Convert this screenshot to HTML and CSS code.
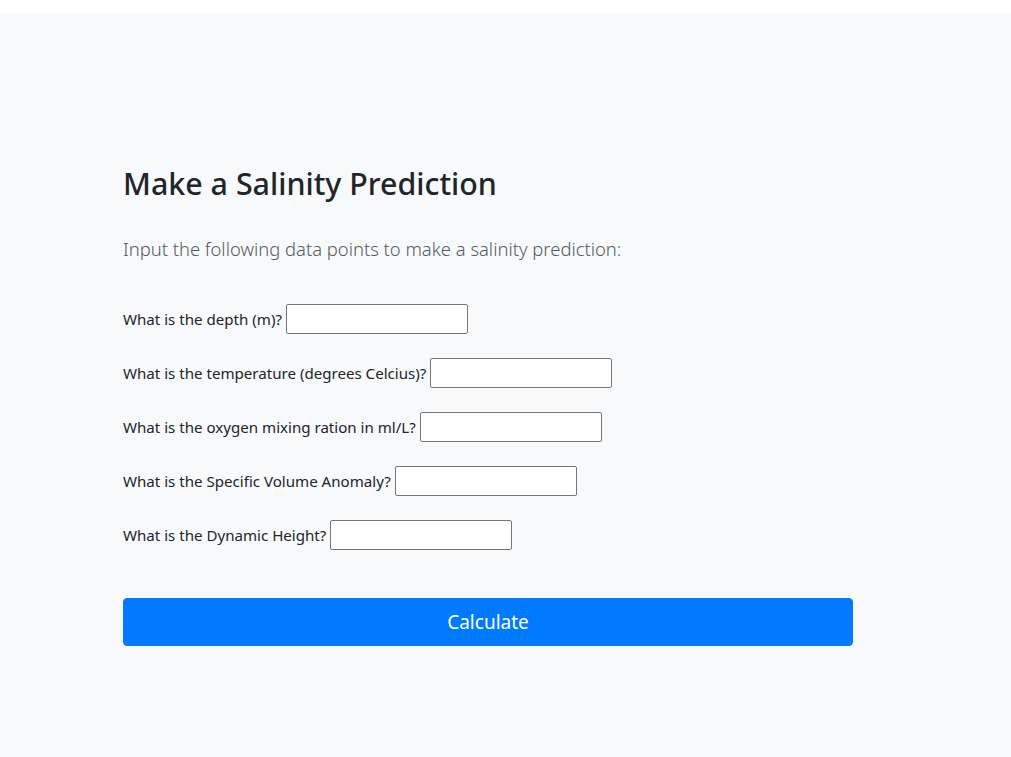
FILE: index.html
```html
<!DOCTYPE html>
<html lang="en">
<head>
<meta charset="utf-8">
<title>Salinity Prediction</title>
<link rel="stylesheet" href="styles.css">
</head>
<body>
<main class="jumbo">
  <div class="content">
    <h2 class="title">Make a Salinity Prediction</h2>
    <p class="lead">Input the following data points to make a salinity prediction:</p>
    <form class="form">
      <div class="row"><label>What is the depth (m)? <input type="text" class="field"></label></div>
      <div class="row"><label>What is the temperature (degrees Celcius)? <input type="text" class="field"></label></div>
      <div class="row"><label>What is the oxygen mixing ration in ml/L? <input type="text" class="field"></label></div>
      <div class="row"><label>What is the Specific Volume Anomaly? <input type="text" class="field"></label></div>
      <div class="row"><label>What is the Dynamic Height? <input type="text" class="field"></label></div>
      <button type="button" class="btn">Calculate</button>
    </form>
  </div>
</main>
</body>
</html>
```
FILE: styles.css
```css
html, body {
  margin: 0;
  padding: 0;
  background: #ffffff;
  font-family: "Noto Sans", "Open Sans", sans-serif;
  color: #212529;
}
.jumbo {
  margin-top: 14px;
  background: #f8f9fa;
  min-height: 743px;
  padding: 152px 0 0 123px;
  box-sizing: border-box;
}
.content {
  width: 730px;
}
.title {
  margin: 0 0 33px 0;
  font-size: 30.4px;
  font-weight: 500;
  line-height: 1.2;
}
.lead {
  margin: 0 0 41px 0;
  font-size: 18.4px;
  font-weight: 300;
  color: #555b61;
  line-height: 1.5;
}
.form {
  display: flex;
  flex-direction: column;
}
.row {
  height: 54px;
  display: flex;
  align-items: flex-start;
}
.row label {
  font-size: 15.1px;
  line-height: 30px;
  display: flex;
  align-items: center;
  gap: 0;
  white-space: pre;
}
.field {
  width: 182px;
  height: 30px;
  box-sizing: border-box;
  border: 1px solid #767676;
  border-radius: 2px;
  background: #fff;
  margin: 0;
  padding: 1px 2px;
}
.btn {
  margin-top: 24px;
  height: 48px;
  width: 730px;
  background: #007bff;
  border: 1px solid #007bff;
  border-radius: 4px;
  color: #fff;
  font-family: "Noto Sans", sans-serif;
  font-size: 19px;
  font-weight: 400;
  padding: 0;
}
```
